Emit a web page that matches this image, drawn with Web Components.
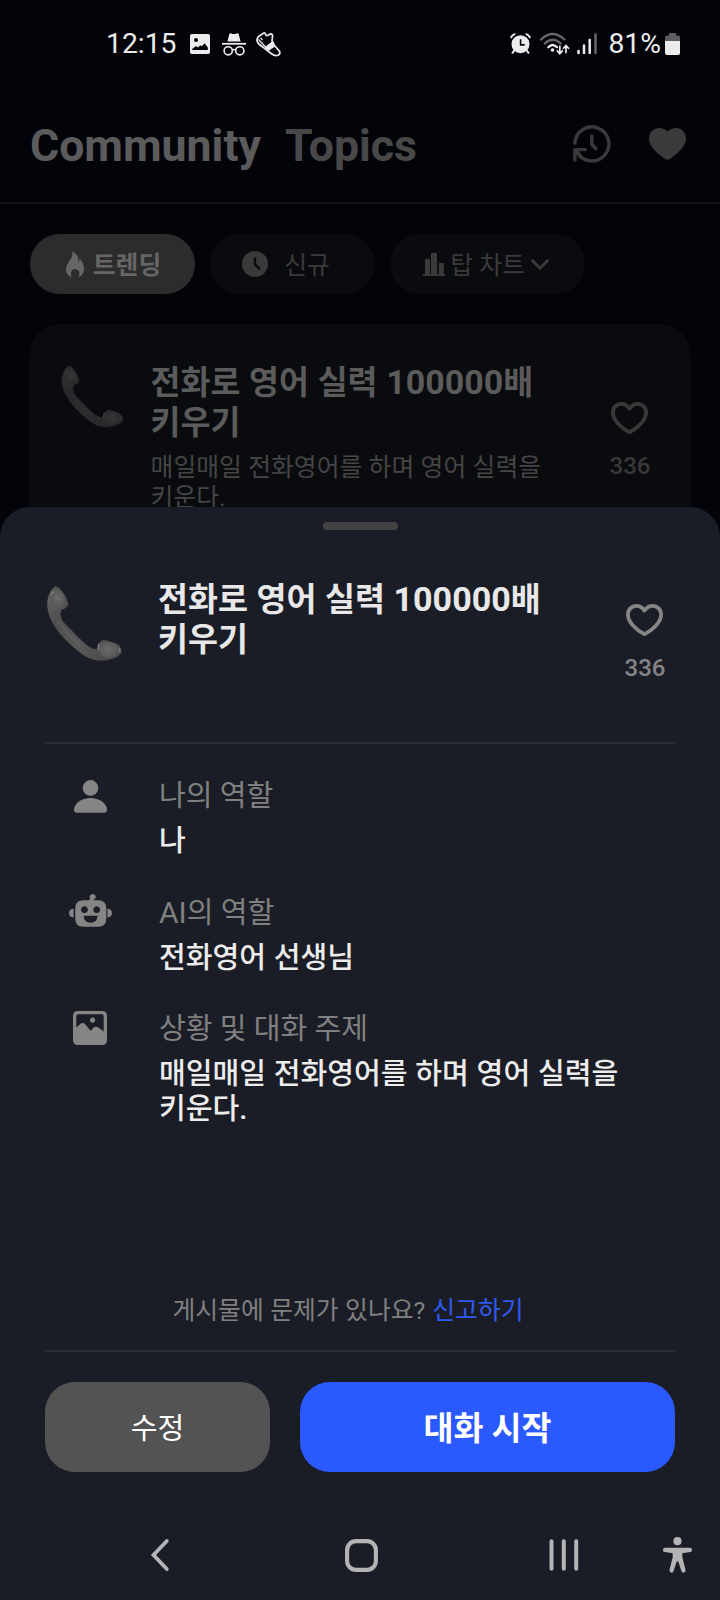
<!DOCTYPE html>
<html lang="ko">
<head>
<meta charset="utf-8">
<title>Community</title>
<style>
html,body{margin:0;padding:0;background:#03040a}
body{width:720px;height:1600px;overflow:hidden;font-family:Roboto,"Noto Sans CJK KR",sans-serif}
</style>
</head>
<body>
<app-screen></app-screen>
<script>
const ICONS = {
  photo: ['0 0 20 20', '<path fill="currentColor" fill-rule="evenodd" d="M2 0h16a2 2 0 0 1 2 2v16a2 2 0 0 1-2 2H2a2 2 0 0 1-2-2V2a2 2 0 0 1 2-2zM2.2 16h15.600v-2.500l-3.200-4.300-2.800 3-1.600-1-2.200 2.200-2-1.400-3.800 3zM6 4a2 2 0 1 0 .1 0z"/>'],
  incognito: ['0 0 24 23', '<path fill="currentColor" d="M7.4 0.8Q8.200 0 9.300.6Q12 1.600 14.700.6Q15.800 0 16.600.8L18.600 8.600H5.400z"/><path d="M0 10.800h24" stroke="currentColor" stroke-width="1.800"/><g fill="none" stroke="currentColor" stroke-width="1.600"><circle cx="6.200" cy="17.800" r="4.100"/><circle cx="17.800" cy="17.800" r="4.100"/><path d="M10.200 17.200q1.800-1.400 3.600 0"/></g>'],
  shoe: ['0 0 25 25', '<path fill="none" stroke="currentColor" stroke-width="1.700" stroke-linejoin="round" d="M1 8.500Q1 5 4 3.500L8 .9Q9.500.8 9.600 2.500Q10 4.200 12 3.300L14.800 1.800Q16.600 2 16.600 4L16 8.600L18.500 13.500L23.600 19.400Q24.600 22.200 22 23.300Q19 24.300 15.500 21.700L7.200 15.300Q1.500 11.800 1 8.500z"/><path fill="currentColor" d="M8.800 15.200L16.500 9l3 5.200-7.200 4.700z"/><path stroke="currentColor" stroke-width="1.200" d="M2.500 7.500l8.500 9M4.500 5.800l2 2.200"/>'],
  alarm: ['0 0 21 21', '<g fill="none" stroke="currentColor" stroke-width="2" stroke-linecap="round"><path d="M1.200 4.200Q2.300 2.200 4.600 1.200M19.800 4.200Q18.700 2.200 16.400 1.200M4.200 17.500L2.500 19.800M16.800 17.500l1.700 2.300"/></g><path fill="currentColor" fill-rule="evenodd" d="M10.500 2.200a9 9 0 1 1 0 18 9 9 0 0 1 0-18zM9.800 6.200v6.500h4.900v-1.600h-3.300V6.200z"/>'],
  wifi: ['0 0 30 22', '<g fill="none" stroke-width="2.300" stroke-linecap="round"><g stroke="#66676b"><path d="M1 6.500Q12.500-4.500 24.500 6.500M4.800 10.500Q12.500 3 20.800 10.500"/></g><path stroke="currentColor" d="M8.300 14.200Q12.500 9.800 17 14.200"/></g><circle cx="12.500" cy="17" r="1.800" fill="currentColor"/><g fill="none" stroke="currentColor" stroke-width="1.700"><path d="M19.800 12.500v7.500M16.800 17.400l3 3.300 3-3.300M26 20.200v-7M23 15.800l3-3.300 3 3.300"/></g>'],
  signal: ['0 0 20 22', '<g stroke-width="2.500" stroke-linecap="round" stroke="currentColor"><path d="M1.500 18v2M7 12.500V20M12.700 7v13"/><path stroke="#66676b" d="M18.500 1.500V20"/></g>'],
  battery: ['0 0 15 22', '<path fill="#5c5d61" d="M4 0h7v2.500h2q2 0 2 2V8H0V4.500q0-2 2-2h2z"/><path fill="currentColor" d="M0 8h15v12q0 2-2 2H2q-2 0-2-2z"/>'],
  history: ['0 0 38 38', '<g fill="none" stroke="currentColor" stroke-width="3.400" stroke-linecap="round" stroke-linejoin="round"><path d="M1.900 18.200A17 17 0 1 1 4.500 28"/><path d="M1.900 35V24.600h10.400M2.500 25.200L8 31.500"/><path d="M18.800 11v8.500l4 4"/></g>'],
  heart: ['0 0 37 32', '<path fill="currentColor" d="M18.500 3.700Q22 0 26.500 0C32.500 0 37 4.200 37 10.500C37 19.500 25.500 28 19.800 31.500Q18.500 32.200 17.200 31.500C11.500 28 0 19.500 0 10.500C0 4.200 4.500 0 10.500 0Q15 0 18.500 3.700z"/>'],
  heartLine: ['0 0 37 32', '<path fill="none" stroke="currentColor" stroke-width="3.800" stroke-linejoin="round" d="M18.500 6.600Q22 1.900 26.300 1.900C31.500 1.900 35.100 5.600 35.100 10.800C35.100 18 26.500 26.500 18.500 30.200C10.500 26.500 1.900 18 1.900 10.800C1.900 5.600 5.500 1.900 10.700 1.900Q15 1.900 18.500 6.600z"/>'],
  flame: ['0 0 18 27', '<path fill="currentColor" d="M6.500 0C12 3.500 12.800 8 12.300 12.200Q13.800 10.200 13.200 7.200C16.500 10 18 14 18 17.800C18 22 16 25 12.500 26.400Q14 24.500 13 20.500C12.200 17.500 6.500 17 5.300 20.500Q4.300 24.500 5.800 26.400C2 25 0 22 0 18.200C0 11.500 7.500 8.500 6.500 0z"/>'],
  clock: ['0 0 26 26', '<path fill="currentColor" fill-rule="evenodd" d="M13 0a13 13 0 1 1 0 26 13 13 0 0 1 0-26zM12.900 6.300q-1.200 0-1.200 1.200v5.700q0 .6.400 1l4.100 4q1 .8 1.800 0 .8-.9 0-1.800l-3.800-3.700V7.500q0-1.200-1.300-1.200z"/>'],
  chart: ['0 0 22 23', '<path fill="currentColor" d="M0 21h22v2H0zM2 7q0-1 1-1h3q1 0 1 1v14.500H2zM8 1q0-1 1-1h4q1 0 1 1v20.500H8zM15.800 11q0-1 1-1h3q1 0 1 1v10.500h-5z"/>'],
  chevron: ['0 0 18 11', '<path fill="none" stroke="currentColor" stroke-width="3" stroke-linecap="round" stroke-linejoin="round" d="M1.400 1.500L9 9.200l7.600-7.700"/>'],
  person: ['0 0 33 33', '<circle cx="16.500" cy="7.900" r="7.800" fill="currentColor"/><path fill="currentColor" d="M16.500 18C25.500 18 33 23.500 33 30q0 2.700-2.800 2.700H2.800Q0 32.700 0 30C0 23.500 7.500 18 16.500 18z"/>'],
  robot: ['0 0 43 33', '<path fill="currentColor" fill-rule="evenodd" d="M14.500 6.200H20L21.300 4.600A2.900 2.900 0 1 1 24.900 5.600L24.300 6.200H29q8.300 0 8.300 8.300v10q0 8.300-8.300 8.300H14.500q-8.300 0-8.300-8.300v-10q0-8.300 8.300-8.300zM15.400 12.300a3.400 3.400 0 1 0 .1 0zM27.700 12.300a3.400 3.400 0 1 0 .1 0zM14.700 21.800q.4 7 6.900 7t6.900-7z"/><path fill="currentColor" d="M4.600 14.800v8.700Q0 23.200 0 19.100t4.600-4.300zM38.400 14.800v8.700q4.600-.3 4.600-4.400t-4.600-4.300z"/>'],
  image: ['0 0 34 34', '<path fill="currentColor" fill-rule="evenodd" d="M5 0h24q5 0 5 5v24q0 5-5 5H5q-5 0-5-5V5q0-5 5-5zM5 3.200Q3.300 3.200 3.300 5v11.500l3.900-3.600q2.500-1.700 4.800 0l5.700 7 2.800-3.300q2.500-1.700 4.800 0l5.400 4V5q0-1.800-1.700-1.800zM19.500 6.500a2.600 2.600 0 1 0 .1 0z"/>'],
  back: ['0 0 18 32', '<path fill="none" stroke="currentColor" stroke-width="3.800" stroke-linecap="round" d="M15.800 2L2.500 16l13.300 14"/>'],
  home: ['0 0 33 33', '<rect x="2.100" y="2.100" width="28.800" height="28.800" rx="9" fill="none" stroke="currentColor" stroke-width="4.100"/>'],
  recents: ['0 0 30 32', '<path stroke="currentColor" stroke-width="4" stroke-linecap="round" d="M2.500 2.200v27.600M14.800 2.200v27.600M27.200 2.200v27.600"/>'],
  access: ['0 0 29 36', '<circle cx="14.500" cy="4.200" r="4.100" fill="currentColor"/><path fill="currentColor" d="M2 10.700h25q2 0 2 2.200t-2 2.200L19.300 16.300V20L22.500 33q.2 2-1.500 2.600-2 .3-2.600-1.500L15.300 24.500h-1.600L10.600 34.100q-.6 1.800-2.600 1.500-1.700-.6-1.500-2.600L9.700 20V16.300L2 15.100q-2 0-2-2.200t2-2.200z"/>'],
  phone: ['48 43 232 232', '<defs><linearGradient id="h" x1="0" y1="0" x2="1" y2="1"><stop offset="0" stop-color="#6c6c6c"/><stop offset=".3" stop-color="#4e4e4e"/><stop offset=".6" stop-color="#585858"/><stop offset="1" stop-color="#464646"/></linearGradient><radialGradient id="e" cx=".45" cy=".5" r=".65"><stop offset="0" stop-color="#6c6c6c"/><stop offset=".7" stop-color="#565656"/><stop offset="1" stop-color="#484848"/></radialGradient></defs><path fill="url(#h)" stroke="#222326" stroke-width="3" d="M77 46Q57 55 51 90C46 137 76 181 118 220C153 253 180 275 219 272C250 270 270 259 277 245Q277 226 257 217L226 208Q211 207 201 235Q184 238 153 207L102 155Q84 128 101 113Q116 112 116 100Q112 81 96 61Q87 48 77 46z"/><path fill="url(#e)" d="M77 48Q56 60 61 90Q70 112 94 117Q113 114 114 100Q110 80 94 60Q85 48 77 48z"/><path fill="url(#e)" d="M226 210Q206 207 203 238Q213 263 235 265Q267 262 275 245Q273 228 256 219z"/><path fill="none" stroke="#8a8a8a" stroke-width="4" stroke-linecap="round" opacity=".8" d="M64 72Q67 66 70 64M207 221Q204 228 206 236M269 235q3 4 1 8"/><path fill="none" stroke="#666" stroke-width="7" stroke-linecap="round" opacity=".5" d="M84 152Q112 190 148 222"/>']
};

function define(name, css, html) {
  const template = document.createElement('template');
  template.innerHTML = `<style>*{box-sizing:border-box}${css}</style>${html}`;
  customElements.define(name, class extends HTMLElement {
    constructor() {
      super();
      this.attachShadow({ mode: 'open' }).append(template.content.cloneNode(true));
    }
  });
}

customElements.define('ui-icon', class extends HTMLElement {
  connectedCallback() {
    if (this.shadowRoot) return;
    const [box, body] = ICONS[this.getAttribute('name')];
    this.attachShadow({ mode: 'open' }).innerHTML =
      `<style>:host{display:block;flex:none}svg{display:block;width:100%;height:100%;overflow:visible}</style>
       <svg viewBox="${box}" preserveAspectRatio="none" aria-hidden="true">${body}</svg>`;
  }
});

define('status-bar', `
  :host{display:flex;align-items:center;height:87px;padding:0 40px 0 106px;color:#ececec;font-size:28.300px;line-height:32px}
  .sp{flex:1}
  .photo{width:20px;height:20px;margin:1px 0 0 14px}
  .inc{width:24px;height:23px;margin:1px 0 0 12px}
  .shoe{width:25px;height:25px;margin:1px 0 0 10px}
  .alarm{width:21px;height:21px}
  .wifi{width:30px;height:22px;margin-left:9px}
  .sig{width:20px;height:22px;margin-left:7px}
  .pct{margin-left:11px}
  .bat{width:15px;height:22px;margin:1px 0 0 4px}`,
  `<span>12:15</span><ui-icon class="photo" name="photo"></ui-icon><ui-icon class="inc" name="incognito"></ui-icon><ui-icon class="shoe" name="shoe"></ui-icon>
   <span class="sp"></span>
   <ui-icon class="alarm" name="alarm"></ui-icon><ui-icon class="wifi" name="wifi"></ui-icon><ui-icon class="sig" name="signal"></ui-icon><span class="pct">81%</span><ui-icon class="bat" name="battery"></ui-icon>`);

define('app-header', `
  :host{display:flex;align-items:center;height:117px;padding:0 34px 2px 30px;border-bottom:2px solid #121315;color:#3a3a3a;font-weight:700;font-size:44.600px;line-height:52px}
  span{padding-top:4px}
  .on{color:#5b5b5b}.off{color:#484848;margin-left:24px;flex:1}
  .hist{width:38px;height:38px;margin-right:38px}.heart{width:37px;height:32px}`,
  `<span class="on">Community</span><span class="off">Topics</span><ui-icon class="hist" name="history"></ui-icon><ui-icon class="heart" name="heart"></ui-icon>`);

define('filter-chip', `
  :host{display:flex;align-items:center;justify-content:center;height:60px;border-radius:30px;background:#0a0b0e;color:#3a3a3a;font-size:24.800px;line-height:30px;white-space:nowrap}
  :host([active]){background:#2c2c2c;color:#666;font-weight:700}
  ::slotted(span){padding-top:3px}`,
  `<slot></slot>`);

define('like-count', `
  :host{display:flex;flex-direction:column;align-items:center;width:42px;font-size:24px;line-height:28px;font-weight:500}
  ui-icon{width:37px;height:32px;margin:0 1px 18px 0}`,
  `<ui-icon name="heartLine"></ui-icon><span><slot></slot></span>`);

define('topic-card', `
  :host{display:flex;align-items:flex-start;height:260px;margin:30px 30px 0;padding:38px 39px 0 31px;border-radius:30px;background:#0a0b0e}
  .pic{width:63px;height:63px;margin-top:3px;opacity:.44}
  .text{flex:1;margin-left:26.600px}
  .title{font-size:32.600px;line-height:40px;font-weight:700;color:#5b5b5b;word-spacing:.5px}
  .desc{margin-top:10px;font-size:24.800px;line-height:30px;color:#454545;word-spacing:.2px}
  like-count{margin-top:40px;color:#383838}`,
  `<ui-icon class="pic" name="phone"></ui-icon><div class="text"><div class="title"><slot name="title"></slot></div><div class="desc"><slot></slot></div></div><like-count>336</like-count>`);

define('info-row', `
  :host{display:flex;align-items:flex-start;font-size:29.100px;line-height:35px;margin-bottom:35px}
  .ic{display:flex;justify-content:center;width:90px;margin-right:24px;color:#858585}
  .label{color:#808080;margin-bottom:10px}
  .text{padding-top:1px}
  .body{color:#ececec;font-weight:500;word-spacing:.5px}`,
  `<div class="ic"><slot name="icon"></slot></div><div class="text"><div class="label"><slot name="label"></slot></div><div class="body"><slot></slot></div></div>`);

define('sheet-button', `
  :host{display:flex;align-items:center;justify-content:center;height:90px;padding-top:3px;border-radius:30px;background:#535353;color:#fff;font-size:29.100px;line-height:36px}
  :host([primary]){background:#2a59ff;font-weight:700;font-size:32.600px}`,
  `<slot></slot>`);

define('nav-bar', `
  :host{display:flex;align-items:center;height:90px;padding:0 28px 0 151px;color:#b4b4b7}
  .b{width:18px;height:32px;margin-right:176px}.h{width:33px;height:33px;margin-right:171px}
  .r{width:30px;height:32px;margin-right:84px}.a{width:29px;height:36px}`,
  `<ui-icon class="b" name="back"></ui-icon><ui-icon class="h" name="home"></ui-icon><ui-icon class="r" name="recents"></ui-icon><ui-icon class="a" name="access"></ui-icon>`);

define('bottom-sheet', `
  :host{position:absolute;left:0;right:0;top:507px;bottom:0;display:flex;flex-direction:column;background:#1b1d26;border-radius:30px 30px 0 0}
  .handle{width:75px;height:8px;border-radius:4px;background:#424242;margin:15px auto 0}
  .head{display:flex;align-items:flex-start;height:212px;margin:0 45px;padding:49px 9px 0 1px}
  .pic{width:77px;height:77px;margin-top:6px}
  .title{flex:1;margin-left:35px;font-size:32.600px;line-height:40px;font-weight:700;color:#e8e8e8;word-spacing:.5px}
  like-count{margin-top:25px;color:#858585}
  .rule{height:2px;flex:none;margin:0 45px;background:#2d2d31}
  .rows{flex:1;padding:34px 45px 0}
  .report{display:flex;justify-content:center;margin-left:-24px;height:57px;font-size:24.800px;line-height:36px;color:#808080;word-spacing:.3px}
  .report b{font-weight:400;color:#2f5af0;margin-left:7px}
  .actions{display:grid;grid-template-columns:225px 375px;gap:30px;padding:30px 45px 38px}
  .lat{font-size:30px}
  .num{font-size:34px}
  .p{width:33px;height:33px;margin-top:2px}.r{width:43px;height:33px}.i{width:34px;height:34px}`,
  `<div class="handle"></div>
   <div class="head"><ui-icon class="pic" name="phone"></ui-icon><div class="title">전화로 영어 실력 <span class="num">100000</span>배<br>키우기</div><like-count>336</like-count></div>
   <div class="rule"></div>
   <div class="rows">
     <info-row><ui-icon slot="icon" class="p" name="person"></ui-icon><span slot="label">나의 역할</span>나</info-row>
     <info-row><ui-icon slot="icon" class="r" name="robot"></ui-icon><span slot="label"><span class="lat">AI</span>의 역할</span>전화영어 선생님</info-row>
     <info-row><ui-icon slot="icon" class="i" name="image"></ui-icon><span slot="label">상황 및 대화 주제</span>매일매일 전화영어를 하며 영어 실력을<br>키운다.</info-row>
   </div>
   <div class="report">게시물에 문제가 있나요?<b>신고하기</b></div>
   <div class="rule"></div>
   <div class="actions"><sheet-button>수정</sheet-button><sheet-button primary>대화 시작</sheet-button></div>
   <nav-bar></nav-bar>`);

define('app-screen', `
  :host{display:block;position:relative;width:720px;height:1600px;overflow:hidden;background:#03040a}
  .chips{display:grid;grid-template-columns:165px 165px 195px;gap:15px;padding:30px 30px 0}
  .flame{width:18px;height:27px;margin:0 9px 0 2px}
  .clock{width:26px;height:26px;margin-right:16px}
  .new{margin-right:13px}
  .chart{width:22px;height:23px;margin-right:5px}
  .chev{width:18px;height:11px;margin:0 3px 0 6px}
  .num{font-size:34px}`,
  `<status-bar></status-bar>
   <app-header></app-header>
   <div class="chips">
     <filter-chip active><ui-icon class="flame" name="flame"></ui-icon><span>트렌딩</span></filter-chip>
     <filter-chip><ui-icon class="clock" name="clock"></ui-icon><span class="new">신규</span></filter-chip>
     <filter-chip><ui-icon class="chart" name="chart"></ui-icon><span>탑 차트</span><ui-icon class="chev" name="chevron"></ui-icon></filter-chip>
   </div>
   <topic-card><span slot="title">전화로 영어 실력 <span class="num">100000</span>배<br>키우기</span>매일매일 전화영어를 하며 영어 실력을<br>키운다.</topic-card>
   <bottom-sheet></bottom-sheet>`);
</script>
</body>
</html>
